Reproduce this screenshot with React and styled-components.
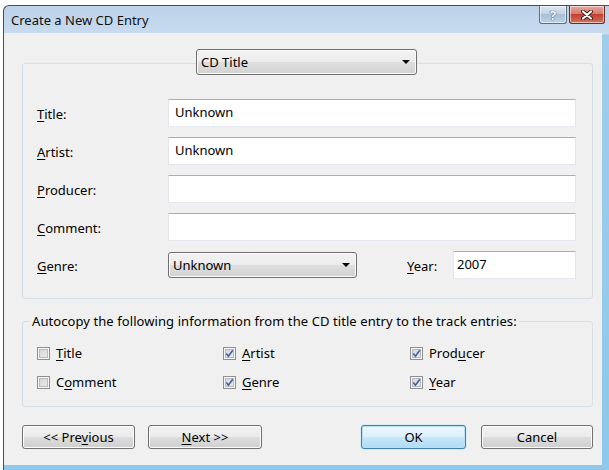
import React from 'react';
import styled, { createGlobalStyle, css } from 'styled-components';

const GlobalStyle = createGlobalStyle`
  html, body {
    margin: 0;
    padding: 0;
    background: #fff;
  }
  body {
    font-family: 'Noto Sans', 'Segoe UI', sans-serif;
    font-size: 13px;
    color: #000;
  }
`;

const Page = styled.div`
  width: 609px;
  height: 470px;
  box-sizing: border-box;
  padding: 5px 0 0 3px;
  overflow: hidden;
`;

const Window = styled.div`
  height: 100%;
  box-sizing: border-box;
  display: flex;
  flex-direction: column;
  border-top: 1px solid #44505c;
  border-left: 1px solid #44505c;
  border-radius: 6px 0 0 0;
  background: linear-gradient(180deg, #bcd2e9 0px, #c8dbef 28px, #9fcdea 29px, #8ec8ea 100%);
`;

const TitleBar = styled.div`
  height: 27px;
  display: flex;
  align-items: flex-start;
  justify-content: space-between;
  padding: 0 4px 0 7px;
`;

const Caption = styled.span`
  font-size: 13px;
  line-height: 28px;
  color: #111;
`;

const CaptionButtons = styled.div`
  display: flex;
  gap: 2px;
`;

const CaptionButton = styled.div`
  width: ${p => p.$w}px;
  height: 18px;
  box-sizing: border-box;
  display: flex;
  align-items: center;
  justify-content: center;
  border: 1px solid #5f6f82;
  border-top: none;
  border-radius: 0 0 3px 3px;
  background: linear-gradient(180deg, #dbe6f1 0%, #c3d4e6 45%, #a9bfd7 50%, #bcd2e8 100%);
  box-shadow: inset 0 0 0 1px rgba(255, 255, 255, 0.55);
  color: #fff;
  font-weight: bold;
  font-size: 13px;
  text-shadow: 0 0 1px #2b3a4c, 0 0 1px #2b3a4c;

  ${p => p.$close && css`
    border-color: #6b2b25;
    background: linear-gradient(180deg, #e8a99f 0%, #d87b6d 45%, #c1402f 50%, #d3745f 100%);
  `}
`;

const Client = styled.div`
  flex: 1;
  margin: 0 7px 5px 0;
  background: #f0f0f0;
  padding-top: 16px;
  display: flex;
  flex-direction: column;
`;

const Combo = styled.div`
  box-sizing: border-box;
  width: ${p => p.$w}px;
  height: 26px;
  flex: none;
  display: flex;
  align-items: center;
  justify-content: space-between;
  padding: 0 6px 1px 4px;
  border: 1px solid #707070;
  border-radius: 3px;
  background: linear-gradient(180deg, #f3f3f3 0%, #ececec 48%, #dedede 52%, #d2d2d2 100%);
  box-shadow: inset 0 0 0 1px #fbfbfb;
  position: relative;
  z-index: 1;
`;

const TopCombo = styled(Combo)`
  margin-left: 192px;
`;

const Arrow = styled.span`
  width: 0;
  height: 0;
  margin-top: 1px;
  border-left: 4px solid transparent;
  border-right: 4px solid transparent;
  border-top: 4px solid #000;
`;

const GroupBox = styled.div`
  box-sizing: border-box;
  height: 236px;
  margin: -12px 9px 0 18px;
  padding: 35px 16px 0 14px;
  border: 1px solid #d5dfe5;
  border-radius: 3px;
  display: flex;
  flex-direction: column;
  gap: 10px;
`;

const FieldRow = styled.div`
  height: 28px;
  display: flex;
  align-items: center;
`;

const FieldLabel = styled.label`
  width: ${p => p.$w || 131}px;
  flex: none;
  margin-left: ${p => p.$ml || 0}px;
  padding-top: 2px;
`;

const TextBox = styled.div`
  box-sizing: border-box;
  height: 28px;
  flex: 1;
  display: flex;
  align-items: center;
  padding: 0 0 3px ${p => p.$pl || 6}px;
  background: #fff;
  border: 1px solid #e2e5ea;
  border-top-color: #abadb3;
  border-bottom-color: #e3e9ef;
`;

const Key = styled.span`
  text-decoration: underline;
  text-decoration-thickness: 1px;
  text-underline-offset: 2px;
`;

const Fieldset = styled.fieldset`
  margin: 13px 9px 0 18px;
  padding: 0 14px 14px;
  border: 1px solid #d5dfe5;
  border-radius: 3px;
  min-width: 0;
`;

const Legend = styled.legend`
  margin-left: -7px;
  padding: 0 2px;
  line-height: 18px;
  letter-spacing: 0.08px;
`;

const CheckGrid = styled.div`
  margin-top: 13px;
  display: grid;
  grid-template-columns: 186px 187px auto;
  row-gap: 9px;
`;

const CheckItem = styled.label`
  height: 20px;
  display: flex;
  align-items: center;
  gap: 6px;
`;

const CheckSquare = styled.span`
  width: 13px;
  height: 13px;
  box-sizing: border-box;
  flex: none;
  display: flex;
  align-items: center;
  justify-content: center;
  border: 1px solid #8f8f8f;
  background: linear-gradient(135deg, #cfd2d6 0%, #eeeeee 100%);
  box-shadow: inset 0 0 0 1px #f6f6f6, inset 0 0 0 2px #b8bcc2;
`;

const Footer = styled.div`
  margin-top: 18px;
  padding: 0 9px 0 18px;
  display: flex;
`;

const Button = styled.button`
  box-sizing: border-box;
  width: ${p => p.$w}px;
  height: 24px;
  margin-left: ${p => (p.$auto ? 'auto' : `${p.$ml || 0}px`)};
  padding: 0 0 1px;
  font: inherit;
  color: #000;
  border: 1px solid #707070;
  border-radius: 3px;
  background: linear-gradient(180deg, #f2f2f2 0%, #ebebeb 48%, #dddddd 52%, #cfcfcf 100%);
  box-shadow: inset 0 0 0 1px #fcfcfc;

  ${p => p.$default && css`
    border-color: #3c7fb1;
    background: linear-gradient(180deg, #ecf7fd 0%, #dcf1fc 48%, #c4e7fb 52%, #b0dcf4 100%);
    box-shadow: inset 0 0 0 1px #b5e2fa, 0 0 1px #5fc4f0;
  `}
`;

const CloseGlyph = () => (
  <svg width="14" height="10" viewBox="0 0 14 10">
    <path d="M3 1.5 L11 8.5 M11 1.5 L3 8.5" stroke="#3b1a17" strokeWidth="4" strokeLinecap="round" />
    <path d="M3 1.5 L11 8.5 M11 1.5 L3 8.5" stroke="#fff" strokeWidth="2.2" strokeLinecap="round" />
  </svg>
);

const CheckBox = ({ checked, children }) => (
  <CheckItem>
    <CheckSquare>
      {checked && (
        <svg width="9" height="9" viewBox="0 0 9 9">
          <path d="M1.3 4.6 L3.4 7.2 L7.8 1.2" fill="none" stroke="#4260a6" strokeWidth="1.6" />
        </svg>
      )}
    </CheckSquare>
    <span>{children}</span>
  </CheckItem>
);

const fields = [
  { key: 'T', rest: 'itle:', value: 'Unknown' },
  { key: 'A', rest: 'rtist:', value: 'Unknown' },
  { key: 'P', rest: 'roducer:', value: '' },
  { key: 'C', rest: 'omment:', value: '' },
];

export default function App() {
  return (
    <Page>
      <GlobalStyle />
      <Window>
        <TitleBar>
          <Caption>Create a New CD Entry</Caption>
          <CaptionButtons>
            <CaptionButton $w={28}>?</CaptionButton>
            <CaptionButton $w={36} $close>
              <CloseGlyph />
            </CaptionButton>
          </CaptionButtons>
        </TitleBar>
        <Client>
          <TopCombo $w={221}>
            <span>CD Title</span>
            <Arrow />
          </TopCombo>
          <GroupBox>
            {fields.map(f => (
              <FieldRow key={f.key}>
                <FieldLabel>
                  <Key>{f.key}</Key>
                  {f.rest}
                </FieldLabel>
                <TextBox>{f.value}</TextBox>
              </FieldRow>
            ))}
            <FieldRow>
              <FieldLabel>
                <Key>G</Key>enre:
              </FieldLabel>
              <Combo $w={189}>
                <span>Unknown</span>
                <Arrow />
              </Combo>
              <FieldLabel $w={46} $ml={50}>
                <Key>Y</Key>ear:
              </FieldLabel>
              <TextBox $pl={3}>2007</TextBox>
            </FieldRow>
          </GroupBox>
          <Fieldset>
            <Legend>Autocopy the following information from the CD title entry to the track entries:</Legend>
            <CheckGrid>
              <CheckBox><Key>T</Key>itle</CheckBox>
              <CheckBox checked><Key>A</Key>rtist</CheckBox>
              <CheckBox checked>Prod<Key>u</Key>cer</CheckBox>
              <CheckBox>C<Key>o</Key>mment</CheckBox>
              <CheckBox checked><Key>G</Key>enre</CheckBox>
              <CheckBox checked><Key>Y</Key>ear</CheckBox>
            </CheckGrid>
          </Fieldset>
          <Footer>
            <Button $w={113}>&lt;&lt; Pre<Key>v</Key>ious</Button>
            <Button $w={114} $ml={13}><Key>N</Key>ext &gt;&gt;</Button>
            <Button $w={105} $auto $default>OK</Button>
            <Button $w={112} $ml={15}>Cancel</Button>
          </Footer>
        </Client>
      </Window>
    </Page>
  );
}
